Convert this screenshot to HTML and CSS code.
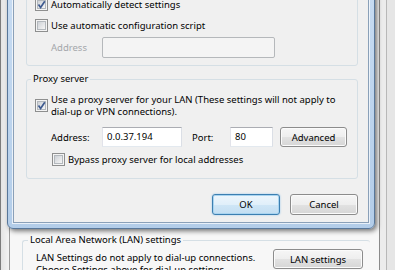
FILE: index.html
```html
<!DOCTYPE html>
<html>
<head>
  <meta charset="utf-8">
  <link rel="stylesheet" href="styles.css">
</head>
<body>
  <div class="window">
    <div class="frame-left"></div>
    <div class="tabpanel">
      <fieldset class="group lan-group">
        <legend>Local Area Network (LAN) settings</legend>
        <div class="lan-row">
          <p class="lan-note">LAN Settings do not apply to dial-up connections.<br>Choose Settings above for dial-up settings.</p>
          <button class="btn lan-btn">LAN settings</button>
        </div>
      </fieldset>
    </div>
    <div class="frame-right"></div>
  </div>

  <div class="dialog">
    <div class="panel">
      <fieldset class="group auto-group">
        <legend>Automatic configuration</legend>
        <div class="check-row">
          <span class="cb"><svg viewBox="0 0 13 13"><path d="M3.5 6.5 L5.6 9.4 L9.8 3.2" /></svg></span>
          <span>Automatically detect settings</span>
        </div>
        <div class="check-row second">
          <span class="cb"></span>
          <span>Use automatic configuration script</span>
        </div>
        <div class="field-row disabled">
          <label class="field-label">Address</label>
          <span class="input script-address"></span>
        </div>
      </fieldset>

      <fieldset class="group proxy-group">
        <legend>Proxy server</legend>
        <div class="check-row two-line">
          <span class="cb"><svg viewBox="0 0 13 13"><path d="M3.5 6.5 L5.6 9.4 L9.8 3.2" /></svg></span>
          <span>Use a proxy server for your LAN (These settings will not apply to<br>dial-up or VPN connections).</span>
        </div>
        <div class="field-row proxy-fields">
          <label class="field-label">Address:</label>
          <span class="input proxy-address">0.0.37.194</span>
          <label class="port-label">Port:</label>
          <span class="input proxy-port">80</span>
          <button class="btn advanced-btn">Advanced</button>
        </div>
        <div class="check-row bypass">
          <span class="cb"></span>
          <span>Bypass proxy server for local addresses</span>
        </div>
      </fieldset>

      <div class="actions">
        <button class="btn ok-btn">OK</button>
        <button class="btn">Cancel</button>
      </div>
    </div>
  </div>
</body>
</html>
```

FILE: styles.css
```css
body {
  width: 395px;
  height: 270px;
  margin: 0;
  overflow: hidden;
  position: relative;
  font-family: "Noto Sans", sans-serif;
  font-size: 9.5px;
  color: #000;
  background: #f0f0f0;
}

/* window behind the dialog */
.window {
  display: flex;
  height: 270px;
}

.frame-left {
  width: 8px;
  border-left: 1px solid #7c7c7c;
  background: linear-gradient(to right, #e4e4e4, #f4f4f4);
}

.tabpanel {
  flex: 1;
  padding: 233px 9px 0 12px;
  background: #f7f7f7;
  border-left: 1px solid #9c9c9c;
  border-right: 1px solid #8a8a8a;
}

.frame-right {
  width: 15px;
  background: linear-gradient(to right, #ececec 0, #ececec 6px, #b8b8b8 6px, #b8b8b8 7px, #e6e6e6 7px);
}

/* group boxes */
.group {
  margin: 0;
  border: 1px solid #d5dfe5;
  border-radius: 3px;
  padding: 0 8px 0 8px;
}

.group legend {
  margin-left: -4px;
  padding: 0 2px;
  line-height: 14px;
}

.lan-group {
  padding: 2px 7px 10px 10px;
  border-right: none;
  border-bottom: none;
}

.lan-group legend {
  margin-left: -5px;
}

.lan-row {
  display: flex;
  justify-content: space-between;
  align-items: flex-start;
}

.lan-note {
  margin: 3px 0 0 3px;
  line-height: 12px;
}

.lan-btn {
  width: 90px;
  height: 20px;
}

/* dialog */
.dialog {
  position: absolute;
  left: 7px;
  top: -37px;
  width: 368px;
  box-sizing: border-box;
  padding: 5px;
  border: 1px solid #58779a;
  border-radius: 0 0 6px 6px;
  background: linear-gradient(to bottom, #c9ddf3, #b3cde9);
  box-shadow: 2px 2px 5px rgba(0, 0, 0, 0.55);
}

.panel {
  padding: 8px 10px 7px 12px;
  background: #f0f0f0;
  border: 1px solid #8aa0b8;
  box-shadow: 0 0 0 1px rgba(255, 255, 255, 0.7);
}

.auto-group {
  padding-top: 6px;
  padding-bottom: 7px;
}

.proxy-group {
  margin-top: 6px;
  padding-top: 8px;
  padding-bottom: 12px;
}

.check-row {
  display: flex;
  align-items: center;
  gap: 3px;
  height: 13px;
  line-height: 13px;
  white-space: nowrap;
}

.check-row.second {
  margin-top: 8px;
}

.check-row.two-line {
  align-items: flex-start;
  height: auto;
  line-height: 12px;
}

.check-row.two-line .cb {
  margin-top: 5px;
}

.check-row.bypass {
  margin-top: 6px;
  margin-left: 17px;
}

.cb {
  position: relative;
  flex: none;
  width: 13px;
  height: 13px;
  box-sizing: border-box;
  border: 1px solid #8e8f8f;
  background: #f4f4f4;
}

.cb::before {
  content: "";
  display: block;
  margin: 1px;
  height: 7px;
  border: 1px solid #b3b8bd;
  background: linear-gradient(135deg, #cdd1d6, #f6f6f6);
}

.cb svg {
  position: absolute;
  top: -1px;
  left: -1px;
  width: 13px;
  height: 13px;
}

.cb path {
  fill: none;
  stroke: #3e5a8f;
  stroke-width: 1.7;
}

.field-row {
  display: flex;
  align-items: center;
  margin-left: 16px;
  white-space: nowrap;
}

.auto-group .field-row {
  margin-top: 5px;
}

.field-row.disabled {
  color: #a4a7ab;
}

.field-label {
  width: 51px;
}

.input {
  box-sizing: border-box;
  height: 20px;
  line-height: 18px;
  padding: 0 4px;
  background: #fff;
  border: 1px solid #abadb3;
  border-color: #abadb3 #dbdfe6 #e3e9ef #e2e3ea;
}

.script-address {
  width: 173px;
  height: 21px;
  background: #f4f4f4;
  border: 1px solid #b5b8bb;
  border-radius: 2px;
}

.proxy-fields {
  margin-top: 9px;
}

.proxy-address {
  width: 80px;
}

.port-label {
  width: 38px;
  margin-left: 10px;
}

.proxy-port {
  width: 43px;
}

.advanced-btn {
  width: 67px;
  height: 20px;
  margin-left: 7px;
}

/* buttons */
.btn {
  box-sizing: border-box;
  padding: 0;
  font-family: inherit;
  font-size: 9.5px;
  color: #000;
  border: 1px solid #8c8c8c;
  border-radius: 3px;
  background: linear-gradient(to bottom, #f6f6f6 0%, #eeeeee 50%, #e2e2e2 51%, #d6d6d6 100%);
  box-shadow: inset 0 0 0 1px #fbfbfb;
}

.actions {
  display: flex;
  justify-content: flex-end;
  gap: 10px;
  margin-top: 15px;
}

.actions .btn {
  width: 68px;
  height: 21px;
}

.ok-btn {
  border-color: #3c7fb1;
  background: linear-gradient(to bottom, #eef6fc 0%, #e0effa 50%, #cfe6f6 51%, #c3def2 100%);
  box-shadow: inset 0 0 0 1px #a9d4f0, 0 0 2px #8ec3ea;
}
```
